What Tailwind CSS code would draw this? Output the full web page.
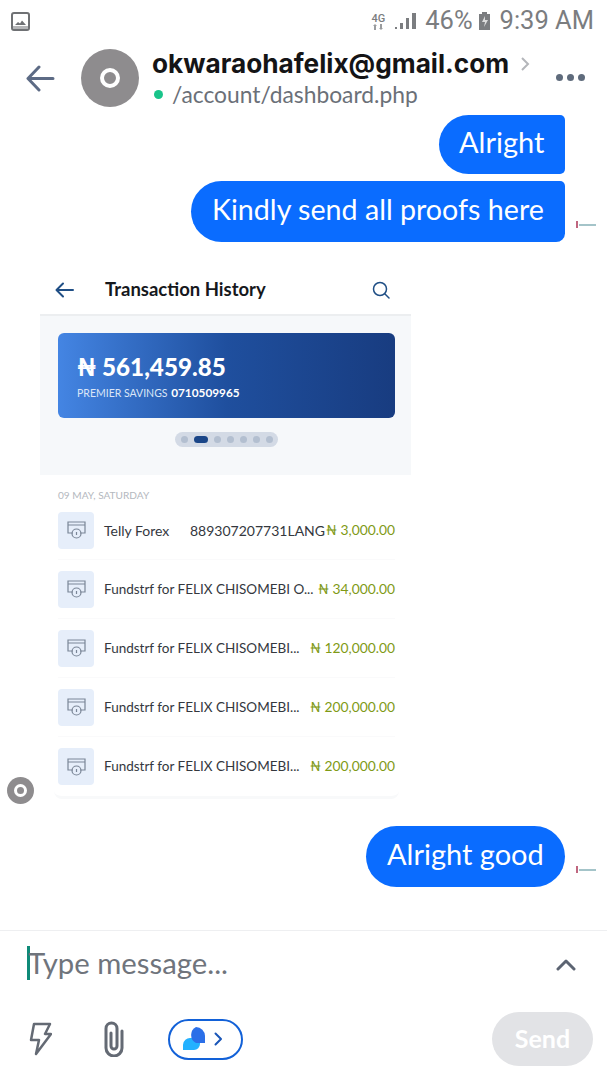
<!DOCTYPE html>
<html lang="en">
  <head>
    <meta charset="UTF-8" />
    <title>Chat</title>
    <script src="https://cdn.jsdelivr.net/npm/@tailwindcss/browser@4"></script>
  </head>
  <body class="bg-white font-['Lato',sans-serif] overflow-hidden">
    <div class="w-[607px] h-[1080px] flex flex-col">
      <!-- status bar -->
      <div class="h-[42px] flex items-center justify-between pl-[11px] pr-[13px] text-[#7b7d80] font-['Roboto',sans-serif]">
        <svg class="w-[19px] h-[19px]" viewBox="0 0 19 19">
          <rect x="1" y="1" width="17" height="17" rx="2" fill="none" stroke="#6f7174" stroke-width="2" />
          <path d="M4 13l3-3 2 1.500 2-3 4 4.500z" fill="#6f7174" />
          <rect x="2" y="14" width="15" height="3" fill="#b5b6b8" />
        </svg>
        <div class="flex items-center">
          <div class="w-[16px] flex flex-col items-center">
            <span class="text-[11px] leading-[11px] font-medium">4G</span>
            <svg class="w-[10px] h-[6px]" viewBox="0 0 10 6" fill="#9a9c9f">
              <path d="M1 6V2H0l2-2 2 2H3v4zM7 0v4H6l2 2 2-2H9V0z" />
            </svg>
          </div>
          <svg class="w-[22px] h-[18px] ml-[9px]" viewBox="0 0 22 18" fill="#7b7d80">
            <rect x="0" y="15" width="2" height="2" />
            <rect x="5" y="11" width="3" height="6" />
            <rect x="11" y="6" width="3" height="11" />
            <rect x="17" y="1" width="4" height="16" />
          </svg>
          <span class="text-[25.500px] leading-none ml-[8px]">46%</span>
          <svg class="w-[13px] h-[18px] ml-[5px]" viewBox="0 0 13 18">
            <path d="M4 0h5v2h3v16H1V2h3z" fill="#7b7d80" />
            <path d="M7 4L4 10h3l-1 5 4-7H7z" fill="#dcdcdc" />
          </svg>
          <span class="text-[25.500px] leading-none ml-[9px]">9:39 AM</span>
        </div>
      </div>

      <!-- chat header -->
      <div class="h-[72px] flex items-center pl-[26px] pr-[22px]">
        <svg class="w-[29px] h-[29px]" viewBox="0 0 29 29" fill="none" stroke="#5d6b85" stroke-width="3" stroke-linecap="round" stroke-linejoin="round">
          <path d="M27 14.500H3M13 3L2 14.500 13 26" />
        </svg>
        <div class="ml-[26px] w-[58px] h-[58px] rounded-full bg-[#8e8c8e] flex items-center justify-center">
          <div class="w-[20px] h-[20px] rounded-full border-[4px] border-white"></div>
        </div>
        <div class="ml-[13px] flex-1 min-w-0">
          <div class="flex items-center">
            <span class="font-['Inter',sans-serif] text-[26.200px] leading-[32px] font-bold text-[#141416] whitespace-nowrap">okwaraohafelix@gmail.com</span>
            <svg class="w-[9px] h-[14px] ml-[12px] shrink-0" viewBox="0 0 9 14" fill="none" stroke="#b4b6ba" stroke-width="2">
              <path d="M1 1l6 6-6 6" />
            </svg>
          </div>
          <div class="flex items-center">
            <span class="ml-[2px] w-[9px] h-[9px] rounded-full bg-[#19c48a]"></span>
            <span class="ml-[9px] text-[22.800px] leading-[28px] text-[#6b7078]">/account/dashboard.php</span>
          </div>
        </div>
        <div class="flex gap-[4px] mt-[-1px]">
          <span class="w-[7px] h-[7px] rounded-full bg-[#5f6b7c]"></span>
          <span class="w-[7px] h-[7px] rounded-full bg-[#5f6b7c]"></span>
          <span class="w-[7px] h-[7px] rounded-full bg-[#5f6b7c]"></span>
        </div>
      </div>

      <!-- messages -->
      <div class="h-[816px] flex flex-col pt-px relative">
        <div class="flex justify-end pr-[42px]">
          <div class="h-[59px] w-[126px] pl-[20px] pb-[5px] flex items-center bg-[#0a6cff] text-white text-[29px] rounded-l-[30px] rounded-r-[5px]">Alright</div>
        </div>
        <div class="flex justify-end items-center pr-[7px] mt-[7px]">
          <div class="h-[61px] w-[374px] pl-[21px] pb-[5px] flex items-center bg-[#0a6cff] text-white text-[28.650px] rounded-l-[31px] rounded-tr-[5px] rounded-br-[9px]">Kindly send all proofs here</div>
          <div class="w-[24px] ml-[11px] mt-[26px] h-[4px] flex items-center blur-[0.5px]">
            <span class="w-[2px] h-[7px] bg-[#b0405f]/80"></span>
            <span class="w-[17px] h-[2px] ml-px bg-[#4a8a94]/50"></span>
          </div>
        </div>

        <!-- shared screenshot -->
        <div class="ml-[40px] mt-[23px] w-[371px] h-[538px] bg-white text-[#34383e]">
          <div class="h-[51px] flex items-center pl-[15px] pr-[21px] border-b-2 border-[#eceef0]">
            <svg class="w-[19px] h-[16px]" viewBox="0 0 19 16" fill="none" stroke="#1f4e85" stroke-width="2" stroke-linecap="round" stroke-linejoin="round">
              <path d="M18 8H2M8 1.500L1.500 8 8 14.500" />
            </svg>
            <span class="ml-[31px] pt-px flex-1 text-[18.500px] font-bold text-[#16181c]">Transaction History</span>
            <svg class="w-[18px] h-[18px]" viewBox="0 0 18 18" fill="none" stroke="#1f4e85" stroke-width="1.500" stroke-linecap="round">
              <circle cx="8" cy="8" r="6.500" />
              <path d="M13 13l4 4" />
            </svg>
          </div>
          <div class="h-[159px] bg-[#f6f8fa] pt-[17px] pl-[18px] flex flex-col items-start">
            <div class="w-[337px] h-[85px] rounded-[6px] bg-gradient-to-r from-[#4485e3] via-[#1f4f9e] to-[#183c80] pl-[19px] pt-[19px] text-white">
              <div class="text-[24.200px] leading-[30px] font-black">₦ 561,459.85</div>
              <div class="mt-[4px] text-[10.500px] leading-[14px] text-[#dbe6f7]">PREMIER SAVINGS <span class="ml-[1px] text-[11.800px] font-bold text-white">0710509965</span></div>
            </div>
            <div class="mt-[14px] ml-[117px] w-[103px] h-[15px] rounded-full bg-[#d3dae5] flex items-center justify-center gap-[6px]">
              <span class="w-[7px] h-[7px] rounded-full bg-[#b3bfd0]"></span>
              <span class="w-[14px] h-[7px] rounded-full bg-[#1a4688]"></span>
              <span class="w-[7px] h-[7px] rounded-full bg-[#b3bfd0]"></span>
              <span class="w-[7px] h-[7px] rounded-full bg-[#b3bfd0]"></span>
              <span class="w-[7px] h-[7px] rounded-full bg-[#b3bfd0]"></span>
              <span class="w-[7px] h-[7px] rounded-full bg-[#b3bfd0]"></span>
              <span class="w-[7px] h-[7px] rounded-full bg-[#b3bfd0]"></span>
            </div>
          </div>
          <div class="pl-[18px] pr-[16px] pt-[14px]">
            <div class="text-[10.100px] leading-[12px] text-[#b4b8be]">09 MAY, SATURDAY</div>
            <div class="flex flex-col rounded-b-[8px] border-b-[3px] border-[#f8f9fa] mx-[-4px] px-[4px]">
              <div class="h-[59px] flex items-center border-b border-[#fafafb] text-[14px]">
                <div class="w-[36px] h-[37px] rounded-[4px] bg-[#e6eefa] flex items-center justify-center">
                  <svg class="w-[19px] h-[18px]" viewBox="0 0 19 18" fill="none" stroke="#7a8697" stroke-width="1.200">
                    <path d="M6 12H1V1h17v11h-5M1 4h17" />
                    <circle cx="9.500" cy="12.500" r="4.500" />
                    <path d="M9.500 11v3" />
                  </svg>
                </div>
                <span class="ml-[10px] w-[86px] shrink-0">Telly Forex</span>
                <span class="flex-1 truncate">889307207731LANG</span>
                <span class="text-[13.800px] text-[#7f9a16]">₦ 3,000.00</span>
              </div>
              <div class="h-[59px] flex items-center border-b border-[#fafafb] text-[13.500px]">
                <div class="w-[36px] h-[37px] rounded-[4px] bg-[#e6eefa] flex items-center justify-center">
                  <svg class="w-[19px] h-[18px]" viewBox="0 0 19 18" fill="none" stroke="#7a8697" stroke-width="1.200">
                    <path d="M6 12H1V1h17v11h-5M1 4h17" />
                    <circle cx="9.500" cy="12.500" r="4.500" />
                    <path d="M9.500 11v3" />
                  </svg>
                </div>
                <span class="ml-[10px] flex-1 truncate">Fundstrf for FELIX CHISOMEBI O...</span>
                <span class="text-[13.800px] text-[#7f9a16]">₦ 34,000.00</span>
              </div>
              <div class="h-[59px] flex items-center border-b border-[#fafafb] text-[13.500px]">
                <div class="w-[36px] h-[37px] rounded-[4px] bg-[#e6eefa] flex items-center justify-center">
                  <svg class="w-[19px] h-[18px]" viewBox="0 0 19 18" fill="none" stroke="#7a8697" stroke-width="1.200">
                    <path d="M6 12H1V1h17v11h-5M1 4h17" />
                    <circle cx="9.500" cy="12.500" r="4.500" />
                    <path d="M9.500 11v3" />
                  </svg>
                </div>
                <span class="ml-[10px] flex-1 truncate">Fundstrf for FELIX CHISOMEBI...</span>
                <span class="text-[13.800px] text-[#7f9a16]">₦ 120,000.00</span>
              </div>
              <div class="h-[59px] flex items-center border-b border-[#fafafb] text-[13.500px]">
                <div class="w-[36px] h-[37px] rounded-[4px] bg-[#e6eefa] flex items-center justify-center">
                  <svg class="w-[19px] h-[18px]" viewBox="0 0 19 18" fill="none" stroke="#7a8697" stroke-width="1.200">
                    <path d="M6 12H1V1h17v11h-5M1 4h17" />
                    <circle cx="9.500" cy="12.500" r="4.500" />
                    <path d="M9.500 11v3" />
                  </svg>
                </div>
                <span class="ml-[10px] flex-1 truncate">Fundstrf for FELIX CHISOMEBI...</span>
                <span class="text-[13.800px] text-[#7f9a16]">₦ 200,000.00</span>
              </div>
              <div class="h-[59px] flex items-center text-[13.500px]">
                <div class="w-[36px] h-[37px] rounded-[4px] bg-[#e6eefa] flex items-center justify-center">
                  <svg class="w-[19px] h-[18px]" viewBox="0 0 19 18" fill="none" stroke="#7a8697" stroke-width="1.200">
                    <path d="M6 12H1V1h17v11h-5M1 4h17" />
                    <circle cx="9.500" cy="12.500" r="4.500" />
                    <path d="M9.500 11v3" />
                  </svg>
                </div>
                <span class="ml-[10px] flex-1 truncate">Fundstrf for FELIX CHISOMEBI...</span>
                <span class="text-[13.800px] text-[#7f9a16]">₦ 200,000.00</span>
              </div>
            </div>
          </div>
        </div>

        <!-- sender avatar beside the picture -->
        <div class="absolute left-[7px] top-[663px] w-[27px] h-[27px] rounded-full bg-[#8e8c8e] flex items-center justify-center">
          <div class="w-[13px] h-[13px] rounded-full border-[3px] border-white"></div>
        </div>

        <div class="flex justify-end items-center pr-[7px] mt-[23px]">
          <div class="h-[61px] w-[199px] pl-[21px] pb-[5px] flex items-center bg-[#0a6cff] text-white text-[29px] rounded-full">Alright good</div>
          <div class="w-[24px] ml-[11px] mt-[26px] h-[4px] flex items-center blur-[0.5px]">
            <span class="w-[2px] h-[7px] bg-[#b0405f]/80"></span>
            <span class="w-[17px] h-[2px] ml-px bg-[#4a8a94]/50"></span>
          </div>
        </div>
      </div>

      <!-- composer -->
      <div class="flex-1 border-t border-[#eeeff1] flex flex-col">
        <div class="h-[64px] flex items-center pl-[27px] pr-[31px]">
          <span class="w-[3px] h-[34px] bg-[#0f8a78]"></span>
          <span class="flex-1 text-[29.300px] text-[#6f747c] ml-[-2px]">Type message...</span>
          <svg class="w-[20px] h-[13px] mt-[2px]" viewBox="0 0 20 13" fill="none" stroke="#5c6472" stroke-width="3" stroke-linecap="round" stroke-linejoin="round">
            <path d="M2 11l8-8 8 8" />
          </svg>
        </div>
        <div class="flex items-center pl-[29px] pr-[14px] mt-[17px]">
          <svg class="w-[23px] h-[34px]" viewBox="0 0 23 34" fill="none" stroke="#646a74" stroke-width="2.500" stroke-linejoin="round">
            <path d="M5 2h16l-5 10h6L7 32l3-14H2z" />
          </svg>
          <svg class="ml-[51px] w-[22px] h-[36px]" viewBox="0 0 22 36" fill="none" stroke="#646a74" stroke-width="3" stroke-linecap="round">
            <path d="M8 12v13a3 3 0 0 0 6 0V7.500a5.500 5.500 0 0 0-11 0V27a8 8 0 0 0 16 0V10" />
          </svg>
          <div class="ml-[43px] w-[75px] h-[41px] rounded-full border-2 border-[#1261d8] flex items-center pl-[13px]">
            <svg class="w-[24px] h-[24px]" viewBox="0 0 24 24">
              <path d="M8 11h9v6a6 6 0 0 1-6 6H0v-5a7 7 0 0 1 8-7z" fill="#23b1ff" />
              <path d="M14 0a9 9 0 0 1 9 9v7h-9a9 9 0 0 1 0-16z" transform="translate(-1 0)" fill="#2b6fe8" />
            </svg>
            <svg class="ml-[7px] w-[9px] h-[14px]" viewBox="0 0 9 14" fill="none" stroke="#1a56b8" stroke-width="2" stroke-linecap="round" stroke-linejoin="round">
              <path d="M1.500 1.500L7 7l-5.500 5.500" />
            </svg>
          </div>
          <div class="ml-auto w-[101px] h-[54px] rounded-full bg-[#e2e3e6] flex items-center justify-center text-white text-[25px] font-bold">Send</div>
        </div>
      </div>
    </div>
  </body>
</html>
